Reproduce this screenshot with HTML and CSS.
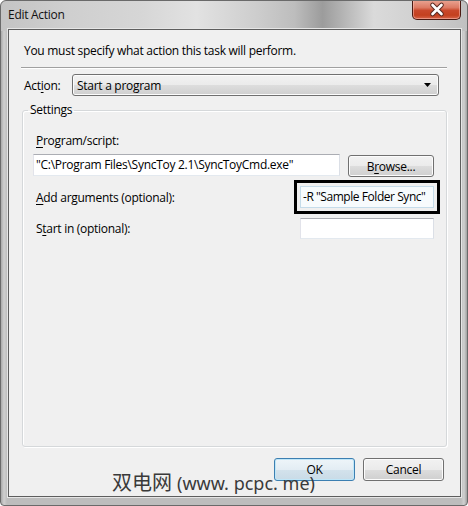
FILE: index.html
```html
<!DOCTYPE html>
<html>
<head>
<meta charset="utf-8">
<link rel="stylesheet" href="styles.css">
</head>
<body>
<div class="window">
  <div class="titlebar">
    <span class="title">Edit Action</span>
    <div class="close">
      <svg width="49" height="20" viewBox="0 0 49 20">
        <path d="M20.5 6 L29.5 15 M29.5 6 L20.5 15" stroke="#5a2a22" stroke-width="4.6" stroke-linecap="round"/>
        <path d="M20.5 6 L29.5 15 M29.5 6 L20.5 15" stroke="#ffffff" stroke-width="2.6" stroke-linecap="round"/>
      </svg>
    </div>
  </div>
  <div class="client">
    <p class="instruction">You must specify what action this task will perform.</p>
    <div class="separator"></div>
    <div class="action-row">
      <span class="action-label">Act<u>i</u>on:</span>
      <div class="combo">
        <span>Start a program</span>
        <svg class="arrow" width="7" height="4" viewBox="0 0 7 4"><path d="M0 0 H7 L3.5 4 Z" fill="#000"/></svg>
      </div>
    </div>
    <fieldset class="group">
      <legend>Settings</legend>
      <div class="field-label"><u>P</u>rogram/script:</div>
      <div class="program-row">
        <div class="textbox program">"C:\Program Files\SyncToy 2.1\SyncToyCmd.exe"</div>
        <div class="button browse">B<u>r</u>owse...</div>
      </div>
      <div class="arg-row">
        <span class="field-label args-label"><u>A</u>dd arguments (optional):</span>
        <div class="textbox small highlighted">-R "Sample Folder Sync"</div>
      </div>
      <div class="arg-row start-row">
        <span class="field-label">S<u>t</u>art in (optional):</span>
        <div class="textbox small start"></div>
      </div>
    </fieldset>
    <div class="buttons">
      <div class="button ok">OK</div>
      <div class="button cancel">Cancel</div>
    </div>
  </div>
  <div class="watermark">双电网<span class="latin">(www. pcpc. me)</span></div>
</div>
</body>
</html>
```

FILE: styles.css
```css
body {
  margin: 0;
  background: #ffffff;
  font-family: "Open Sans", "Noto Sans", sans-serif;
  font-size: 12px;
  letter-spacing: -0.28px;
  color: #000;
}

u {
  text-decoration: underline;
  text-decoration-thickness: 1px;
  text-underline-offset: 2px;
}

.window {
  position: relative;
  width: 468px;
  height: 506px;
  box-sizing: border-box;
  padding: 0 6px 8px 7px;
  display: flex;
  flex-direction: column;
  border: 1px solid #6a6a6a;
  border-radius: 6px 6px 4px 4px;
  background:
    linear-gradient(to right, #c4c4c4 0%, #cfcfcf 15%, #d6d6d6 30%, #e2e2e2 42%, #cdcdcd 55%, #bdbdbd 63%, #9c9c9c 69%, #b2b2b2 73%, #dadada 80%, #d2d2d2 88%, #c0c0c0 100%) top / 100% 30px no-repeat,
    linear-gradient(to right, #a9a9a9 0px, #cfcfcf 3px, #bdbdbd 6px, #bdbdbd calc(100% - 6px), #d0d0d0 calc(100% - 3px), #a0a0a0 100%);
  overflow: hidden;
}

.titlebar {
  height: 28px;
  display: flex;
  align-items: flex-start;
  flex: none;
}

.title {
  margin-top: 6px;
  font-size: 12px;
  line-height: 16px;
  color: #111;
}

.close {
  margin-left: auto;
  margin-top: -1px;
  width: 49px;
  height: 20px;
  box-sizing: border-box;
  border: 1px solid #4a1a12;
  border-top: none;
  border-radius: 0 0 5px 5px;
  background: linear-gradient(#eaa695 0%, #dc7a63 40%, #c9482b 55%, #c4401f 80%, #d6654a 100%);
  box-shadow: inset 0 0 0 1px rgba(255, 200, 190, 0.5);
  overflow: hidden;
}

.close svg {
  display: block;
  margin: -1px 0 0 -1px;
}

.client {
  flex: 1;
  display: flex;
  flex-direction: column;
  background: #f0f0f0;
  border: 1px solid #5e5e5e;
  box-shadow: 0 0 0 1px #e6e6e6;
}

.instruction {
  margin: 13px 0 0 15px;
  line-height: 16px;
}

.separator {
  margin: 8px 13px 0 12px;
  height: 1px;
  background: #a0a0a0;
  border-bottom: 1px solid #ffffff;
}

.action-row {
  display: flex;
  align-items: center;
  margin-top: 5px;
  padding-left: 15px;
}

.action-label {
  width: 48px;
}

.combo {
  width: 367px;
  height: 22px;
  box-sizing: border-box;
  border: 1px solid #707070;
  border-radius: 3px;
  background: linear-gradient(#f2f2f2 0%, #ebebeb 50%, #dddddd 51%, #cfcfcf 100%);
  box-shadow: inset 0 0 0 1px #fcfcfc;
  display: flex;
  align-items: center;
  padding: 0 7px 0 4px;
}

.combo span {
  flex: 1;
}

.arrow {
  display: block;
}

.group {
  flex: 1;
  margin: 6px 13px 0 13px;
  padding: 0 12px 0 10px;
  border: 1px solid #d5d8da;
  border-radius: 3px;
  box-shadow: inset 1px 1px 0 #ffffff, 1px 1px 0 #ffffff;
  min-width: 0;
}

.group legend {
  padding: 0 2px;
  margin-left: -5px;
  line-height: 16px;
}

.field-label {
  padding-left: 3px;
  line-height: 16px;
}

.group > .field-label {
  margin-top: 15px;
}

.program-row {
  display: flex;
  gap: 8px;
  margin-top: 5px;
  align-items: flex-start;
}

.textbox {
  box-sizing: border-box;
  height: 22px;
  background: #ffffff;
  border: 1px solid #e3e9ef;
  border-top-color: #abadb3;
  border-left-color: #e2e3ea;
  border-right-color: #dbdfe6;
  line-height: 20px;
  padding-left: 2px;
  white-space: nowrap;
  overflow: hidden;
}

.program {
  width: 307px;
}

.button {
  box-sizing: border-box;
  height: 22px;
  border: 1px solid #707070;
  border-radius: 3px;
  background: linear-gradient(#f2f2f2 0%, #ebebeb 50%, #dddddd 51%, #cfcfcf 100%);
  box-shadow: inset 0 0 0 1px #fcfcfc;
  display: flex;
  align-items: center;
  justify-content: center;
}

.browse {
  width: 86px;
  margin-top: 1px;
}

.arg-row {
  display: flex;
  align-items: center;
  justify-content: space-between;
  margin-top: 9px;
}

.args-label {
  padding-top: 2px;
}

.small {
  width: 134px;
}

.highlighted {
  background: #f7fbfd;
  border-color: #c5dcea;
  outline: 3px solid #000;
  outline-offset: 3px;
  letter-spacing: -0.45px;
  padding-left: 2px;
}

.start-row {
  margin-top: 10px;
}

.start {
  height: 21px;
}

.buttons {
  display: flex;
  justify-content: flex-end;
  gap: 8px;
  margin: 11px 16px 15px 0;
}

.buttons .button {
  width: 81px;
  height: 23px;
}

.ok {
  border-color: #3c7fb1;
  background: linear-gradient(#eef5f9 0%, #e3edf4 50%, #d3e2ec 51%, #c9dbe7 100%);
  box-shadow: inset 0 0 0 1px #bfe6f8;
}

.watermark {
  position: absolute;
  left: 111px;
  top: 469px;
  font-family: "Noto Sans CJK SC", sans-serif;
  font-size: 20px;
  line-height: 24px;
  letter-spacing: 0;
  color: #3a3a3a;
  white-space: nowrap;
}

.watermark .latin {
  font-family: "Noto Sans", sans-serif;
  font-size: 18px;
  margin-left: 5px;
}
```
